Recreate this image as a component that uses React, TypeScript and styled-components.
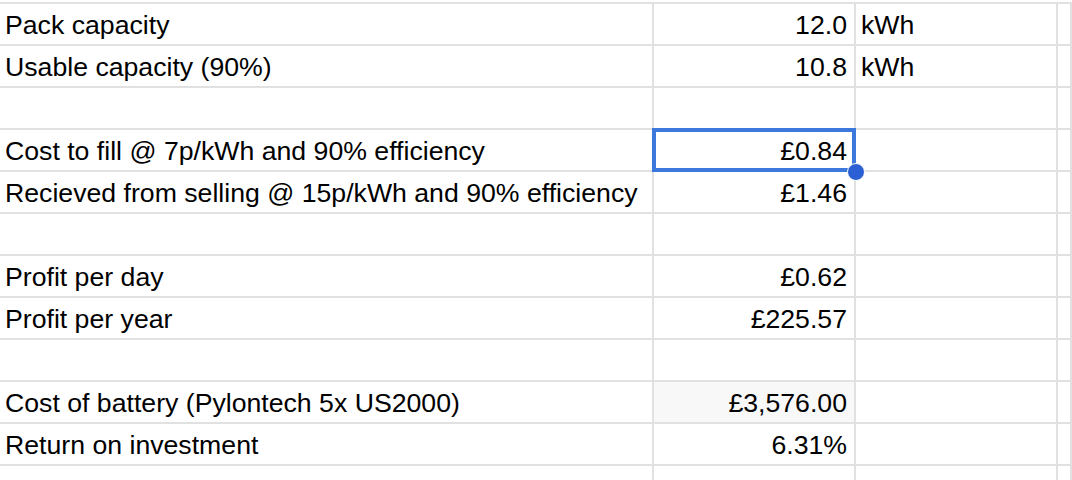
import React from "react";
import styled, { createGlobalStyle } from "styled-components";

const GlobalStyle = createGlobalStyle`
  html, body {
    margin: 0;
    padding: 0;
    background: #ffffff;
  }
  body {
    font-family: "Liberation Sans", Arial, sans-serif;
    overflow: hidden;
  }
`;

const GRID = "#e1e1e1";

const Sheet = styled.div`
  width: 1072px;
  height: 480px;
  padding-top: 2px;
  box-sizing: border-box;
  overflow: hidden;
`;

const Row = styled.div`
  display: grid;
  grid-template-columns: 654px 202px 202px 1fr;
  height: 42px;
`;

const Cell = styled.div<{ $align?: "left" | "right"; $shaded?: boolean }>`
  position: relative;
  box-sizing: border-box;
  height: 42px;
  border-top: 2px solid ${GRID};
  border-right: 2px solid ${GRID};
  background: ${({ $shaded }) => ($shaded ? "#f8f8f8" : "transparent")};
  display: flex;
  align-items: flex-end;
  justify-content: ${({ $align }) => ($align === "right" ? "flex-end" : "flex-start")};
  padding: 0 ${({ $align }) => ($align === "right" ? "7px" : "6px")} 4px
    ${({ $align }) => ($align === "right" ? "6px" : "5px")};
  font-size: 26.67px;
  line-height: 30px;
  color: #000;
  white-space: nowrap;
`;

const Selection = styled.div`
  position: absolute;
  z-index: 2;
  left: -2px;
  top: -2px;
  width: 204px;
  height: 44px;
  box-sizing: border-box;
  border: 4px solid #3d78dc;
  pointer-events: none;
`;

const Handle = styled.div`
  position: absolute;
  right: -13px;
  bottom: -13px;
  width: 18px;
  height: 18px;
  border-radius: 50%;
  background: #2b60d4;
  border: 1px solid #ffffff;
  box-sizing: border-box;
`;

type RowData = {
  label?: string;
  value?: string;
  unit?: string;
  selected?: boolean;
  shaded?: boolean;
};

const rows: RowData[] = [
  { label: "Pack capacity", value: "12.0", unit: "kWh" },
  { label: "Usable capacity (90%)", value: "10.8", unit: "kWh" },
  {},
  { label: "Cost to fill @ 7p/kWh and 90% efficiency", value: "£0.84", selected: true },
  { label: "Recieved from selling @ 15p/kWh and 90% efficiency", value: "£1.46" },
  {},
  { label: "Profit per day", value: "£0.62" },
  { label: "Profit per year", value: "£225.57" },
  {},
  { label: "Cost of battery (Pylontech 5x US2000)", value: "£3,576.00", shaded: true },
  { label: "Return on investment", value: "6.31%" },
  {},
];

export default function App() {
  return (
    <>
      <GlobalStyle />
      <Sheet>
        {rows.map((r, i) => (
          <Row key={i}>
            <Cell>{r.label}</Cell>
            <Cell $align="right" $shaded={r.shaded}>
              {r.value}
              {r.selected && (
                <Selection>
                  <Handle />
                </Selection>
              )}
            </Cell>
            <Cell>{r.unit}</Cell>
            <Cell />
          </Row>
        ))}
      </Sheet>
    </>
  );
}
